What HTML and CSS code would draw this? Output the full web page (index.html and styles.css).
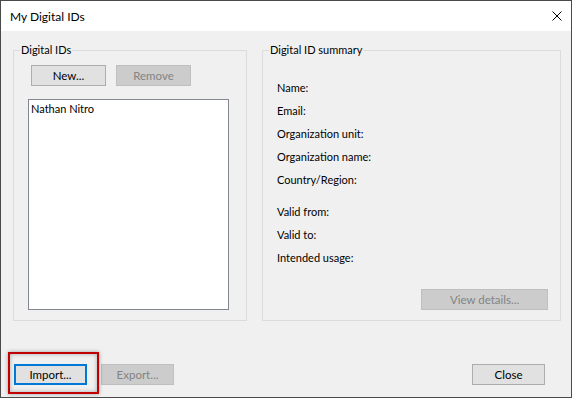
FILE: index.html
```html
<!DOCTYPE html>
<html lang="en">
<head>
    <meta charset="UTF-8">
    <title>My Digital IDs</title>
    <link rel="stylesheet" href="styles.css">
</head>
<body>

<div class="window">
    <div class="titlebar">
        <span class="title">My Digital IDs</span>
        <svg class="close-x" width="10" height="10" viewBox="0 0 10 10">
            <path d="M0.5 0.5 L9.5 9.5 M9.5 0.5 L0.5 9.5" stroke="#000" stroke-width="1" fill="none"/>
        </svg>
    </div>

    <div class="content">
        <div class="groups">
            <fieldset class="group ids-group">
                <legend>Digital IDs</legend>
                <div class="group-body">
                    <div class="button-row">
                        <button class="btn">New...</button>
                        <button class="btn" disabled>Remove</button>
                    </div>
                    <div class="id-list">
                        <div class="id-item">Nathan Nitro</div>
                    </div>
                </div>
            </fieldset>

            <fieldset class="group summary-group">
                <legend>Digital ID summary</legend>
                <div class="group-body">
                    <div class="fields">
                        <div class="field">Name:</div>
                        <div class="field">Email:</div>
                        <div class="field">Organization unit:</div>
                        <div class="field">Organization name:</div>
                        <div class="field">Country/Region:</div>
                    </div>
                    <div class="fields validity">
                        <div class="field">Valid from:</div>
                        <div class="field">Valid to:</div>
                        <div class="field">Intended usage:</div>
                    </div>
                    <div class="details-row">
                        <button class="btn btn-wide" disabled>View details...</button>
                    </div>
                </div>
            </fieldset>
        </div>

        <div class="footer">
            <button class="btn btn-default">Import...</button>
            <button class="btn" disabled>Export...</button>
            <span class="spacer"></span>
            <button class="btn">Close</button>
        </div>
    </div>

    <!-- callout drawn over the screenshot -->
    <div class="highlight"></div>
</div>

</body>
</html>
```

FILE: styles.css
```css
body {
    margin: 0;
    background-color: #ffffff;
    font-family: "Segoe UI", Lato, "Noto Sans", sans-serif;
    font-size: 11px;
    color: #000000;
}
.window {
    position: relative;
    width: 572px;
    height: 398px;
    box-sizing: border-box;
    border: 1px solid #4a4a4a;
    background-color: #f0f0f0;
}
.titlebar {
    height: 30px;
    background-color: #ffffff;
    display: flex;
    align-items: center;
    padding: 0 7px 0 9px;
    font-size: 12px;
}
.title {
    flex: 1;
    margin-top: 1px;
}
.close-x {
    margin-right: 2px;
}
.content {
    height: 366px;
    box-sizing: border-box;
    padding: 11px 10px 12px 12px;
    display: flex;
    flex-direction: column;
}
.groups {
    display: flex;
    gap: 15px;
}
.group {
    margin: 0;
    padding: 0;
    border: 1px solid #dcdcdc;
    height: 279px;
    box-sizing: border-box;
}
.group legend {
    margin-left: 6px;
    padding: 0 1px;
    line-height: 16px;
}
.ids-group {
    width: 234px;
}
.summary-group {
    width: 299px;
}
.ids-group .group-body {
    padding: 7px 13px 10px 14px;
}
.button-row {
    display: flex;
    gap: 10px;
    margin-left: 3px;
    margin-bottom: 13px;
}
.btn {
    height: 21px;
    width: 75px;
    padding: 0;
    font-family: inherit;
    font-size: 11.5px;
    color: #000000;
    background-color: #e1e1e1;
    border: 1px solid #adadad;
}
.btn:disabled {
    color: #838383;
    background-color: #cccccc;
    border-color: #bfbfbf;
}
.id-list {
    width: 201px;
    height: 211px;
    box-sizing: border-box;
    border: 1px solid #828790;
    background-color: #ffffff;
    padding: 1px 2px;
}
.id-item {
    line-height: 15px;
}
.summary-group .group-body {
    padding: 18px 12px 10px 14px;
}
.field {
    height: 23px;
    line-height: 23px;
}
.validity {
    margin-top: 9px;
}
.details-row {
    display: flex;
    justify-content: flex-end;
    margin-top: 20px;
}
.btn-wide {
    width: 127px;
}
.footer {
    display: flex;
    gap: 14px;
    margin-top: 43px;
    padding: 0 16px 0 1px;
}
.footer .btn {
    width: 73px;
}
.btn-default {
    border: 2px solid #0078d7;
}
.spacer {
    flex: 1;
}
.highlight {
    position: absolute;
    left: 7px;
    top: 351px;
    width: 91px;
    height: 42px;
    box-sizing: border-box;
    border: 2px solid #c00000;
    box-shadow: 0 0 4px rgba(0, 0, 0, 0.35), inset 0 0 4px rgba(0, 0, 0, 0.3);
}
```
